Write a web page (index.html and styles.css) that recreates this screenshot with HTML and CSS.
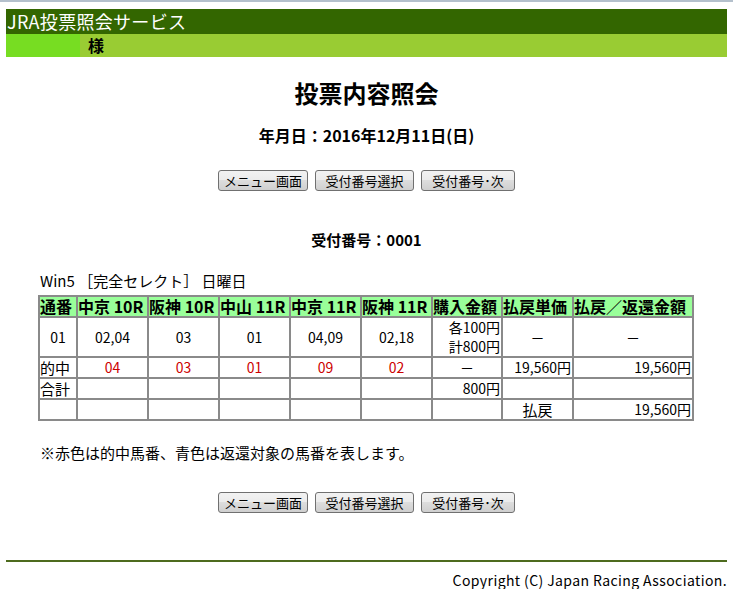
FILE: index.html
```html
<!DOCTYPE html>
<html lang="ja">
<head>
<meta charset="utf-8">
<title>JRA投票照会サービス</title>
<link rel="stylesheet" href="styles.css">
</head>
<body>
<div class="topline"></div>
<div class="page">
  <div class="hd-title">JRA投票照会サービス</div>
  <div class="hd-sub"><span class="hd-name"></span><span class="hd-sama">様</span></div>

  <h1 class="title">投票内容照会</h1>
  <div class="date">年月日：2016年12月11日(日)</div>

  <div class="btns">
    <button class="btn b1">メニュー画面</button>
    <button class="btn b2">受付番号選択</button>
    <button class="btn b3">受付番号･次</button>
  </div>

  <div class="recno">受付番号：0001</div>

  <div class="wrap">
    <div class="kind">Win5 ［完全セレクト］ 日曜日</div>
    <table class="res">
      <colgroup>
        <col class="c0"><col class="c1"><col class="c1"><col class="c1"><col class="c1"><col class="c1"><col class="c6"><col class="c1"><col class="c8">
      </colgroup>
      <tr class="head">
        <th>通番</th><th>中京 10R</th><th>阪神 10R</th><th>中山 11R</th><th>中京 11R</th><th>阪神 11R</th><th>購入金額</th><th>払戻単価</th><th>払戻／返還金額</th>
      </tr>
      <tr class="r1">
        <td class="c">01</td><td class="c">02,04</td><td class="c">03</td><td class="c">01</td><td class="c">04,09</td><td class="c">02,18</td><td class="r two"><div>各100円</div><div>計800円</div></td><td class="c">－</td><td class="c">－</td>
      </tr>
      <tr>
        <td class="lbl">的中</td><td class="c red">04</td><td class="c red">03</td><td class="c red">01</td><td class="c red">09</td><td class="c red">02</td><td class="c">－</td><td class="r">19,560円</td><td class="r">19,560円</td>
      </tr>
      <tr>
        <td class="lbl">合計</td><td></td><td></td><td></td><td></td><td></td><td class="r">800円</td><td></td><td></td>
      </tr>
      <tr>
        <td class="lbl"></td><td></td><td></td><td></td><td></td><td></td><td></td><td class="c big">払戻</td><td class="r">19,560円</td>
      </tr>
    </table>
    <div class="note">※赤色は的中馬番、青色は返還対象の馬番を表します。</div>
  </div>

  <div class="btns btns2">
    <button class="btn b1">メニュー画面</button>
    <button class="btn b2">受付番号選択</button>
    <button class="btn b3">受付番号･次</button>
  </div>

  <div class="foot-line"></div>
  <div class="copy">Copyright (C) Japan Racing Association.</div>
</div>
</body>
</html>
```

FILE: styles.css
```css
html, body {
  margin: 0;
  padding: 0;
  background: #ffffff;
}
body {
  font-family: "Noto Sans CJK JP", sans-serif;
  color: #000000;
}
.topline {
  height: 2px;
  background: #b4c0cc;
}
.page {
  padding: 7px 6px 0 6px;
}
.hd-title {
  height: 25px;
  line-height: 25px;
  background: #336600;
  color: #ffffff;
  font-size: 18px;
  padding-left: 1px;
  letter-spacing: 0.3px;
}
.hd-sub {
  height: 23px;
  background: #99cc33;
  display: flex;
  align-items: center;
}
.hd-name {
  width: 74px;
  height: 23px;
  background: #77dd22;
}
.hd-sama {
  margin-left: 8px;
  font-size: 16px;
  font-weight: bold;
  line-height: 23px;
}
.title {
  margin: 21px 0 0 0;
  text-align: center;
  font-size: 24px;
  line-height: 30px;
  font-weight: bold;
}
.date {
  margin-top: 17px;
  text-align: center;
  font-size: 16px;
  line-height: 20px;
  font-weight: bold;
}
.btns {
  margin-top: 25px;
  display: flex;
  justify-content: center;
  gap: 7px;
}
.btn {
  height: 21px;
  padding: 0;
  border: 1px solid #707070;
  border-radius: 3px;
  background: linear-gradient(#f2f2f2, #ebebeb 50%, #dddddd 50%, #cfcfcf);
  font-family: "Noto Sans CJK JP", sans-serif;
  font-size: 13px;
  line-height: 19px;
  color: #000000;
}
.b1 { width: 90px; }
.b2 { width: 99px; }
.b3 { width: 94px; }
.recno {
  margin-top: 39px;
  text-align: center;
  font-size: 15px;
  line-height: 20px;
  font-weight: bold;
}
.wrap {
  padding-left: 32px;
}
.kind {
  margin-top: 21px;
  padding-left: 2px;
  font-size: 15px;
  line-height: 20px;
}
.res {
  margin-top: 4px;
  width: 654px;
  table-layout: fixed;
  border-collapse: separate;
  border-spacing: 0;
  border: 1px solid #8a8a8a;
}
.c0 { width: 38px; }
.c1 { width: 71px; }
.c6 { width: 70px; }
.c8 { width: 120px; }
.res th, .res td {
  border: 1px solid #8a8a8a;
  padding: 0 1px;
  height: 19px;
  font-size: 14px;
  line-height: 19px;
  white-space: nowrap;
}
.res th {
  background: #99ff99;
  font-size: 16px;
  font-weight: bold;
  text-align: left;
  padding: 0;
}
.res .r1 td {
  height: 38px;
}
.res td.two {
  font-size: 14px;
  line-height: 19px;
}
.res td.c { text-align: center; }
.res td.r { text-align: right; }
.res td.lbl { font-size: 15px; padding: 0; }
.res td.big { font-size: 15px; }
.res td.red { color: #cc0000; }
.note {
  margin-top: 22px;
  padding-left: 2px;
  font-size: 15px;
  line-height: 20px;
}
.btns2 {
  margin-top: 29px;
}
.foot-line {
  margin-top: 47px;
  height: 2px;
  background: #4d6b1e;
}
.copy {
  margin-top: 9px;
  text-align: right;
  font-size: 14px;
  line-height: 18px;
  letter-spacing: 0.4px;
}
```
